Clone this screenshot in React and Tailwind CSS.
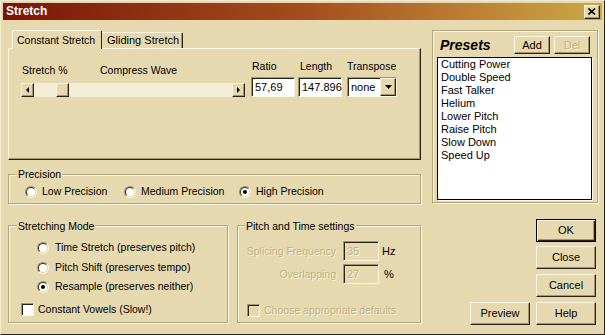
import React from 'react';

const raised =
  'border border-t-[#fbf6e6] border-l-[#fbf6e6] border-r-[#2a2418] border-b-[#2a2418] shadow-[inset_-1px_-1px_0_#a3976f]';
const sunken =
  'border border-t-[#a3976f] border-l-[#a3976f] border-r-[#fbf6e6] border-b-[#fbf6e6] shadow-[inset_1px_1px_0_#2a2418]';
const etched = 'border border-[#b3a67c] shadow-[inset_1px_1px_0_#fbf6e6,1px_1px_0_#fbf6e6]';
const disabledText = 'text-[#bfb187] [text-shadow:1px_1px_0_#f8f1da]';

function Radio({ checked }) {
  return (
    <div className="w-[12px] h-[12px] shrink-0 rounded-full border border-t-[#9c9070] border-l-[#9c9070] border-r-[#fbf6e6] border-b-[#fbf6e6]">
      <div className="w-full h-full rounded-full bg-white border border-t-[#3a3226] border-l-[#3a3226] border-r-[#e6d9af] border-b-[#e6d9af] flex items-center justify-center">
        {checked && <div className="w-[4px] h-[4px] rounded-full bg-black" />}
      </div>
    </div>
  );
}

function Check({ disabled }) {
  return (
    <div className={`w-[13px] h-[13px] shrink-0 ${sunken} ${disabled ? 'bg-[#e6d9af]' : 'bg-white'}`} />
  );
}

function Arrow({ dir }) {
  const pts = {
    left: '3,0 3,6 0,3',
    right: '0,0 0,6 3,3',
    down: '0,0 7,0 3.5,4',
  }[dir];
  return (
    <svg width={dir === 'down' ? 7 : 4} height={dir === 'down' ? 4 : 7} viewBox={dir === 'down' ? '0 0 7 4' : '0 0 4 7'}>
      <polygon points={pts} fill="#000" />
    </svg>
  );
}

function Button({ children, className = '', isDefault, disabled }) {
  const frame = isDefault
    ? 'border border-black shadow-[inset_1px_1px_0_#fbf6e6,inset_-1px_-1px_0_#2a2418,inset_-2px_-2px_0_#a3976f]'
    : raised;
  return (
    <div className={`flex items-center justify-center text-[11px] bg-[#e6d9af] ${frame} ${disabled ? disabledText : ''} ${className}`}>
      {children}
    </div>
  );
}

function Field({ value, className = '', disabled }) {
  return (
    <div className={`h-[20px] flex items-center pl-[3px] text-[11px] ${sunken} ${disabled ? `bg-[#e6d9af] ${disabledText}` : 'bg-white'} ${className}`}>
      {value}
    </div>
  );
}

export default function App() {
  const presets = ['Cutting Power', 'Double Speed', 'Fast Talker', 'Helium', 'Lower Pitch', 'Raise Pitch', 'Slow Down', 'Speed Up'];

  return (
    <div className="w-[605px] h-[335px] bg-[#e6d9af] border border-t-[#f2ead2] border-l-[#f2ead2] border-r-[#2a2418] border-b-[#2a2418] p-[2px] font-['Liberation_Sans',Arial,sans-serif] text-[10.5px] leading-[13px] text-black overflow-hidden select-none">

      {/* Title bar */}
      <div className="h-[17px] flex items-center justify-between pl-[3px] pr-[2px] bg-linear-to-r from-[#7a1407] via-[#a44c1c] to-[#cba845]">
        <span className="text-white font-bold text-[12px]">Stretch</span>
        <div className={`w-[16px] h-[14px] bg-[#e6d9af] flex items-center justify-center ${raised}`}>
          <svg width="8" height="7" viewBox="0 0 8 7">
            <path d="M0.5 0.5 L7 6.5 M7 0.5 L0.5 6.5" stroke="#000" strokeWidth="1.6" />
          </svg>
        </div>
      </div>

      <div className="flex gap-[11px] ml-[5px]">

        {/* Left column */}
        <div className="w-[413px] flex flex-col">

          {/* Tabs */}
          <div className="mt-[10px] h-[18px] flex items-end pl-[4px]">
            <div className="relative z-10 h-[19px] -mb-px w-[90px] pl-[4px] flex items-center bg-[#e6d9af] border border-b-0 border-t-[#fbf6e6] border-l-[#fbf6e6] border-r-[#2a2418] rounded-t-[2px] text-[10.5px]">
              Constant Stretch
            </div>
            <div className="h-[16px] w-[81px] pl-[5px] flex items-center border border-b-0 border-l-0 border-t-[#fbf6e6] border-r-[#2a2418] rounded-tr-[2px] text-[11px] shadow-[inset_-1px_0_0_#a3976f]">
              Gliding Stretch
            </div>
          </div>

          {/* Tab panel */}
          <div className="h-[112px] border border-t-[#fbf6e6] border-l-[#fbf6e6] border-r-[#2a2418] border-b-[#2a2418] shadow-[inset_-1px_-1px_0_#a3976f] pt-[11px] pl-[12px]">
            <div className="flex items-end">
              <div className="w-[224px] flex flex-col">
                <div className="flex h-[13px]">
                  <span className="w-[79px] pl-[1px]">Stretch %</span>
                  <span>Compress Wave</span>
                </div>
                <div className="mt-[6px] h-[14px] flex">
                  <div className={`w-[13px] h-[14px] flex items-center justify-center bg-[#e6d9af] ${raised}`}>
                    <Arrow dir="left" />
                  </div>
                  <div className="flex-1 bg-[#f3ecd6]">
                    <div className={`ml-[22px] w-[13px] h-[14px] bg-[#e6d9af] ${raised}`} />
                  </div>
                  <div className={`w-[13px] h-[14px] flex items-center justify-center bg-[#e6d9af] ${raised}`}>
                    <Arrow dir="right" />
                  </div>
                </div>
              </div>

              <div className="ml-[6px] w-[44px] flex flex-col">
                <span className="pl-[1px]">Ratio</span>
                <Field value="57,69" className="mt-[4px]" />
              </div>
              <div className="ml-[3px] w-[44px] flex flex-col">
                <span className="pl-[2px]">Length</span>
                <Field value="147.896" className="mt-[4px]" />
              </div>
              <div className="ml-[5px] w-[50px] flex flex-col">
                <span>Transpose</span>
                <div className={`mt-[4px] h-[20px] flex bg-white ${sunken}`}>
                  <span className="flex-1 pl-[3px] flex items-center text-[11px]">none</span>
                  <div className={`w-[16px] h-full flex items-center justify-center bg-[#e6d9af] ${raised}`}>
                    <Arrow dir="down" />
                  </div>
                </div>
              </div>
            </div>
          </div>

          {/* Precision */}
          <div className={`mt-[14px] h-[30px] ${etched}`}>
            <div className="-mt-[7px] ml-[8px] px-[1px] w-fit bg-[#e6d9af]">Precision</div>
            <div className="mt-[4px] pl-[16px] flex items-center h-[13px]">
              <div className="w-[99px] flex items-center gap-[5px]"><Radio /><span>Low Precision</span></div>
              <div className="w-[115px] flex items-center gap-[5px]"><Radio /><span>Medium Precision</span></div>
              <div className="flex items-center gap-[5px]"><Radio checked /><span>High Precision</span></div>
            </div>
          </div>

          {/* Bottom groups */}
          <div className="mt-[21px] h-[98px] flex gap-[9px]">
            <div className={`w-[220px] ${etched}`}>
              <div className="-mt-[6px] ml-[8px] px-[1px] w-fit bg-[#e6d9af]">Stretching Mode</div>
              <div className="pl-[28px] flex flex-col">
                <div className="mt-[8px] h-[13px] flex items-center gap-[6px]"><Radio /><span>Time Stretch (preserves pitch)</span></div>
                <div className="mt-[7px] h-[13px] flex items-center gap-[6px]"><Radio /><span>Pitch Shift (preserves tempo)</span></div>
                <div className="mt-[6px] h-[13px] flex items-center gap-[6px]"><Radio checked /><span>Resample (preserves neither)</span></div>
              </div>
              <div className="mt-[10px] pl-[12px] h-[13px] flex items-center gap-[4px]">
                <Check /><span>Constant Vowels (Slow!)</span>
              </div>
            </div>

            <div className={`flex-1 ${etched}`}>
              <div className="-mt-[6px] ml-[7px] px-[1px] w-fit bg-[#e6d9af]">Pitch and Time settings</div>
              <div className="mt-[8px] pl-[8px] flex items-center">
                <span className={`w-[90px] text-right ${disabledText}`}>Splicing Frequency</span>
                <Field value="35" disabled className="ml-[7px] w-[36px]" />
                <span className="ml-[3px] text-[11px]">Hz</span>
              </div>
              <div className="mt-[3px] pl-[8px] flex items-center">
                <span className={`w-[90px] text-right ${disabledText}`}>Overlapping</span>
                <Field value="27" disabled className="ml-[7px] w-[36px]" />
                <span className="ml-[5px] text-[11px]">%</span>
              </div>
              <div className="mt-[20px] pl-[9px] h-[13px] flex items-center gap-[4px]">
                <Check disabled />
                <span className={disabledText}>Choose appropriate defaults</span>
              </div>
            </div>
          </div>
        </div>

        {/* Right column */}
        <div className="w-[166px] flex flex-col">
          <div className={`mt-[10px] h-[173px] ${etched} pt-[5px]`}>
            <div className="flex items-center h-[18px]">
              <span className="ml-[7px] font-bold italic text-[14px]">Presets</span>
              <div className="ml-auto mr-[7px] flex gap-[4px]">
                <Button className="w-[36px] h-[18px]">Add</Button>
                <Button className="w-[36px] h-[18px]" disabled>Del</Button>
              </div>
            </div>
            <div className="mt-[3px] ml-[4px] w-[155px] h-[143px] bg-white border border-black shadow-[1px_1px_0_#fbf6e6] pl-[3px] text-[11px] leading-[13px]">
              {presets.map((p) => (
                <div key={p}>{p}</div>
              ))}
            </div>
          </div>

          <div className="mt-[16px] pr-[2px] flex flex-col items-end">
            <Button isDefault className="w-[60px] h-[23px]">OK</Button>
            <Button className="mt-[4px] w-[60px] h-[23px]">Close</Button>
            <Button className="mt-[5px] w-[60px] h-[23px]">Cancel</Button>
            <div className="mt-[5px] flex gap-[6px]">
              <Button className="w-[60px] h-[23px]">Preview</Button>
              <Button className="w-[60px] h-[23px]">Help</Button>
            </div>
          </div>
        </div>
      </div>
    </div>
  );
}
